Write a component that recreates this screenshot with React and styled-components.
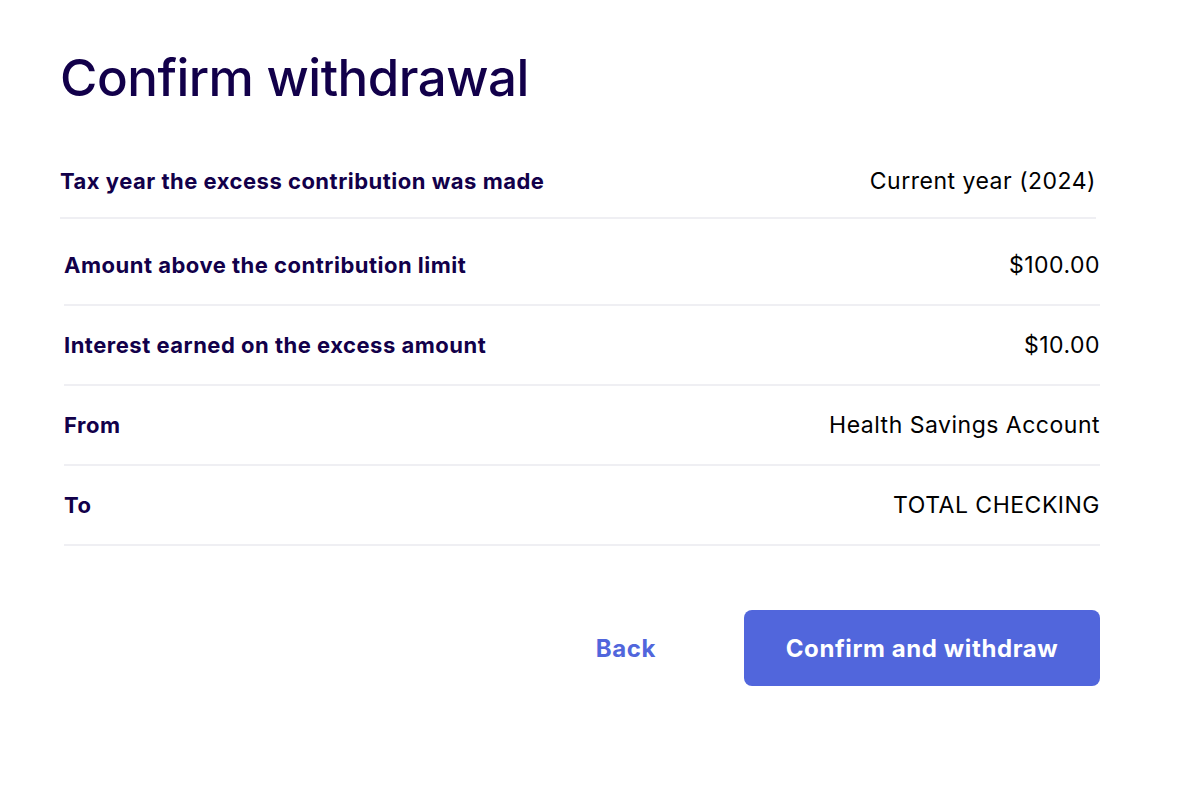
import styled, { createGlobalStyle } from 'styled-components'

const GlobalStyle = createGlobalStyle`
  html, body {
    margin: 0;
    padding: 0;
    background: #ffffff;
  }
  body {
    font-family: Inter, "Noto Sans", sans-serif;
    -webkit-font-smoothing: antialiased;
  }
`

const rows = [
  { label: 'Amount above the contribution limit', value: '$100.00' },
  { label: 'Interest earned on the excess amount', value: '$10.00' },
  { label: 'From', value: 'Health Savings Account' },
  { label: 'To', value: 'TOTAL CHECKING' }
]

const App = () => {
  return (
    <>
      <GlobalStyle />
      <Page>
        <Title>Confirm withdrawal</Title>
        <YearRow>
          <Label>Tax year the excess contribution was made</Label>
          <Value>Current year (2024)</Value>
        </YearRow>
        <Details>
          {rows.map(row => (
            <Row key={row.label}>
              <Label>{row.label}</Label>
              <Value>{row.value}</Value>
            </Row>
          ))}
        </Details>
        <Actions>
          <BackButton>Back</BackButton>
          <PrimaryButton>Confirm and withdraw</PrimaryButton>
        </Actions>
      </Page>
    </>
  )
}

const Page = styled.div`
  width: 1036px;
  padding: 48px 0 0 60px;
`

const Title = styled.h1`
  margin: 0;
  font-size: 51px;
  font-weight: 500;
  line-height: 60px;
  letter-spacing: -0.5px;
  color: #12004a;
`

const Row = styled.div`
  display: flex;
  justify-content: space-between;
  align-items: center;
  height: 78px;
  border-bottom: 2px solid #efeff3;
`

const YearRow = styled(Row)`
  margin-top: 37px;
  height: 72px;
`

// the detail rows sit 4px to the right of the year row
const Details = styled.div`
  margin: 0 -4px 0 4px;
  padding-top: 7px;
`

const Label = styled.span`
  font-size: 22px;
  font-weight: 700;
  letter-spacing: 0.5px;
  color: #12004a;
`

const Value = styled.span`
  font-size: 23px;
  font-weight: 400;
  letter-spacing: 0.5px;
  color: #000000;
`

const Actions = styled.div`
  display: flex;
  justify-content: flex-end;
  align-items: center;
  gap: 88px;
  margin: 64px -4px 0 4px;
`

const BackButton = styled.button`
  background: none;
  border: none;
  padding: 0;
  font-family: inherit;
  font-size: 24px;
  font-weight: 700;
  letter-spacing: 0.6px;
  color: #5166dc;
  cursor: pointer;
`

const PrimaryButton = styled.button`
  width: 356px;
  height: 76px;
  border: none;
  border-radius: 8px;
  background: #5166dc;
  color: #ffffff;
  font-family: inherit;
  font-size: 24px;
  font-weight: 700;
  letter-spacing: 0.6px;
  cursor: pointer;
`

export default App
